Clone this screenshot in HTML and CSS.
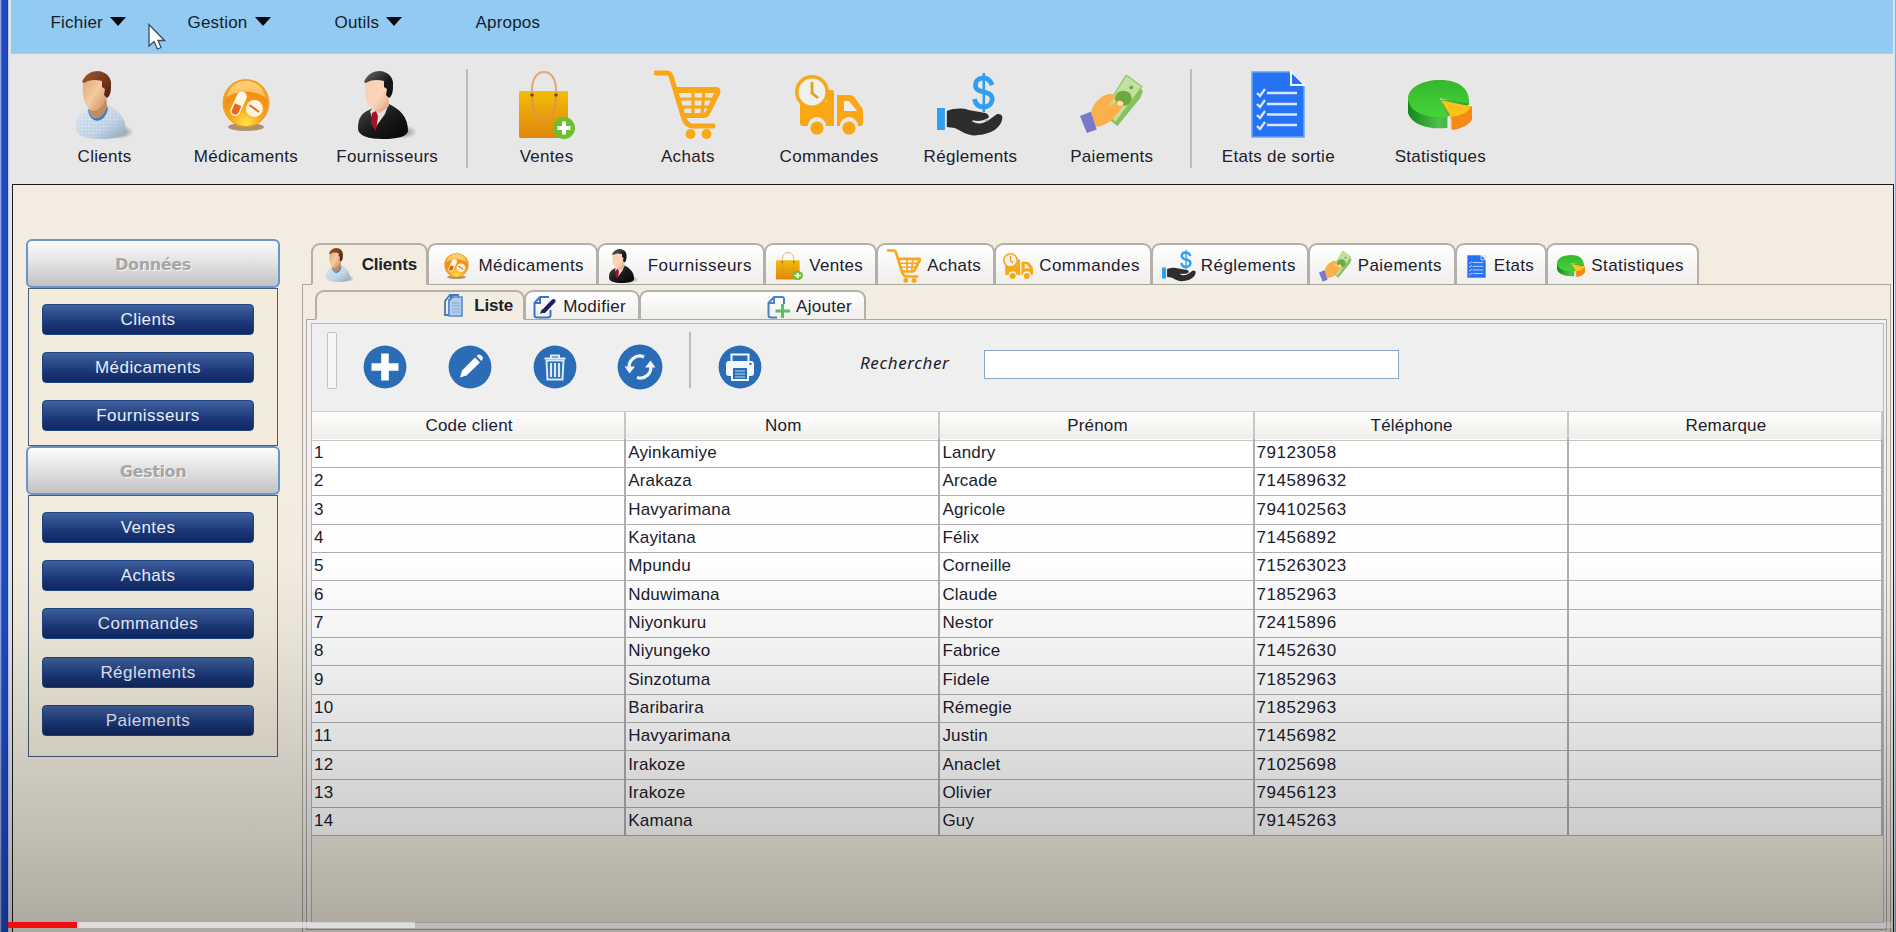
FILE: index.html
```html
<!DOCTYPE html>
<html lang="fr">
<head>
<meta charset="utf-8">
<title>Gestion pharmacie</title>
<link rel="stylesheet" href="styles.css">
</head>
<body>
<svg class="defs" width="0" height="0" aria-hidden="true">
  <defs>
    <linearGradient id="gBag" x1="0" y1="0" x2="0" y2="1"><stop offset="0" stop-color="#f3bd08"/><stop offset="1" stop-color="#de860c"/></linearGradient>
    <linearGradient id="gFace" x1="0" y1="0" x2="1" y2="1"><stop offset="0" stop-color="#d9a272"/><stop offset=".5" stop-color="#f4cba2"/><stop offset="1" stop-color="#c98a58"/></linearGradient>
    <linearGradient id="gFace2" x1="0" y1="0" x2="1" y2="1"><stop offset="0" stop-color="#fbcdb0"/><stop offset=".6" stop-color="#fbd5ba"/><stop offset="1" stop-color="#e5a580"/></linearGradient>
    <linearGradient id="gHair" x1="0" y1="0" x2="1" y2="1"><stop offset="0" stop-color="#a35a33"/><stop offset="1" stop-color="#4e1d0b"/></linearGradient>
    <linearGradient id="gHair2" x1="0" y1="0" x2="1" y2="1"><stop offset="0" stop-color="#6a6e6e"/><stop offset=".6" stop-color="#151717"/></linearGradient>
    <linearGradient id="gShirt" x1="0" y1="0" x2="1" y2="1"><stop offset="0" stop-color="#e9f1f9"/><stop offset=".6" stop-color="#cbdaea"/><stop offset="1" stop-color="#8ca3bb"/></linearGradient>
    <linearGradient id="gSuit" x1="0" y1="0" x2="1" y2="1"><stop offset="0" stop-color="#4b4b4d"/><stop offset=".5" stop-color="#19191b"/><stop offset="1" stop-color="#050505"/></linearGradient>
    <radialGradient id="gPill" cx=".5" cy=".95" r=".9"><stop offset="0" stop-color="#ffe648"/><stop offset=".4" stop-color="#fba51c"/><stop offset=".75" stop-color="#f58d12"/><stop offset="1" stop-color="#f7b43a"/></radialGradient>
    <linearGradient id="gPie" x1="0" y1="0" x2="0" y2="1"><stop offset="0" stop-color="#37b62f"/><stop offset="1" stop-color="#44d53a"/></linearGradient>
    <linearGradient id="gPieSide" x1="0" y1="0" x2="1" y2="0"><stop offset="0" stop-color="#15871a"/><stop offset=".5" stop-color="#4fc04c"/><stop offset="1" stop-color="#2ca42c"/></linearGradient>
    <radialGradient id="gShadow"><stop offset="0" stop-color="#000" stop-opacity=".45"/><stop offset="1" stop-color="#000" stop-opacity="0"/></radialGradient>
    <pattern id="pShirt" width="3.5" height="3.5" patternUnits="userSpaceOnUse"><path d="M1 0V3.5M0 1H3.5" stroke="#8ea9c8" stroke-width=".6" opacity=".45"/></pattern>
  </defs>
  <symbol id="client" viewBox="0 0 58 68" preserveAspectRatio="none">
    <ellipse cx="44" cy="61" rx="14" ry="7" fill="url(#gShadow)"/>
    <path d="M0 57C0 46 4 42 13 38L31 34C41 38 50 46 50 60C49 66 38 68 26 68C10 68 0 65 0 57Z" fill="url(#gShirt)"/>
    <path d="M0 57C0 46 4 42 13 38L31 34C41 38 50 46 50 60C49 66 38 68 26 68C10 68 0 65 0 57Z" fill="url(#pShirt)"/>
    <path d="M13 38C15 49 24 52 31 35L32 38C28 54 14 53 12 39Z" fill="#3f7fc0"/>
    <path d="M14 32L30 24L31 35C27 51 16 50 13 38Z" fill="#c58a5b"/>
    <path d="M7 14C8 6 14 3 20 4C28 4 32 10 31 20C31 31 24 40 17 40C10 38 6 28 7 14Z" fill="url(#gFace)"/>
    <path d="M6 11C9 3 16 0 22 0C31 1 36 7 35 15C35 21 34 25 31 27L28 24L29 18L26 16L26 10C19 8 12 9 8 12Z" fill="url(#gHair)"/>
  </symbol>
  <symbol id="supplier" viewBox="0 0 58 68" preserveAspectRatio="none">
    <ellipse cx="45" cy="61" rx="14" ry="7" fill="url(#gShadow)"/>
    <path d="M0 57C0 46 4 42 13 38L31 33C41 38 50 45 50 60C49 66 38 68 26 68C10 68 0 65 0 57Z" fill="url(#gSuit)"/>
    <path d="M12 40L15 37L25 38L30 35L27 43L17 57Z" fill="#e6dcdc"/>
    <path d="M14 42L18 40L20 45L18 60L13 53Z" fill="#a9131e"/>
    <path d="M14 30L30 24L31 35L22 42L15 38Z" fill="#e9b08d"/>
    <path d="M7 14C8 6 14 3 20 4C28 4 32 10 31 20C31 31 24 40 17 39C10 37 6 28 7 14Z" fill="url(#gFace2)"/>
    <path d="M6 11C9 3 16 0 22 0C31 1 36 7 35 15C35 21 34 25 31 27L28 24L29 18L26 16L26 10C19 8 12 9 8 12Z" fill="url(#gHair2)"/>
  </symbol>
  <symbol id="drug" viewBox="0 0 48 52" preserveAspectRatio="none">
    <ellipse cx="24" cy="48" rx="18" ry="4" fill="#8a5a14" opacity=".6"/>
    <ellipse cx="24" cy="24" rx="23.5" ry="24" fill="#f0a12c"/>
    <ellipse cx="24" cy="24.500" rx="21.500" ry="22.500" fill="url(#gPill)"/>
    <path d="M5 18C8 6 16 2 24 2S40 6 43 18C34 11 14 11 5 18Z" fill="#ffe7a0" opacity=".55"/>
    <g transform="rotate(24 17 25)"><rect x="11.500" y="12" width="10" height="26" rx="5" fill="#fff6e6"/><path d="M13 26H20V33A3.500 3.500 0 0 1 13 33Z" fill="#e8661c"/></g>
    <circle cx="32.500" cy="29.500" r="8.500" fill="#fff3df"/>
    <path d="M27.500 26L37 33" stroke="#d9722b" stroke-width="2"/>
  </symbol>
  <symbol id="bag" viewBox="0 0 56 68" preserveAspectRatio="none">
    <path d="M0 21Q0 20 2 20H47Q49 20 49 21V67H2Q0 67 0 65Z" fill="url(#gBag)"/>
    <path d="M13 23C12 8 18 1 25 1S38 8 37 23" fill="none" stroke="#e0a878" stroke-width="2"/>
    <path d="M13 24C13 41 19 49 25 49S37 41 37 24" fill="none" stroke="#dc9550" stroke-width="2"/>
    <circle cx="13" cy="24" r="1.800" fill="#7a4a08"/><circle cx="37" cy="24" r="1.800" fill="#7a4a08"/>
    <circle cx="45" cy="57" r="11" fill="#6cc030"/>
    <path d="M45 50.500V63.500M38.500 57H51.500" stroke="#fff" stroke-width="4"/>
  </symbol>
  <symbol id="cart" viewBox="0 0 68 69" preserveAspectRatio="none">
    <path d="M2 3H13Q16 3 17 6L30 49Q33 56 39 56H59" fill="none" stroke="#f9a715" stroke-width="5" stroke-linecap="round" stroke-linejoin="round"/>
    <path d="M22 17H63Q68 18 66 24L56 44Q54 48 49 48H32L30 43H49Q51 43 52 41L60 23H24Z" fill="#f9a715"/>
    <path d="M24 29H59M27 37H56M39 20V45M50 20L48 45" stroke="#f9a715" stroke-width="3.200" fill="none"/>
    <circle cx="36.500" cy="64" r="4.900" fill="#f9a715"/><circle cx="52.500" cy="64" r="4.900" fill="#f9a715"/>
  </symbol>
  <symbol id="truck" viewBox="0 0 68 60" preserveAspectRatio="none">
    <path d="M5 27H32V15H37Q39 15 39 18V51H31A9 9 0 0 0 13 51H8Q5 51 5 48Z" fill="#f9a715"/>
    <path d="M42 20H54Q58 20 60 23L67 33Q68 34 68 36V48Q68 51 65 51H63A9 9 0 0 0 45 51H42Z" fill="#f9a715"/>
    <path d="M49 26H54L62 36H49Z" fill="#eee"/>
    <circle cx="17" cy="17" r="17" fill="#f9a715"/><circle cx="17" cy="17" r="13.500" fill="#efefee"/>
    <path d="M17 7V18L23 23" fill="none" stroke="#e5a020" stroke-width="2.800"/>
    <circle cx="22" cy="53" r="6.600" fill="#f9a715"/><circle cx="54" cy="53" r="6.600" fill="#f9a715"/>
  </symbol>
  <symbol id="settle" viewBox="0 0 67 64" preserveAspectRatio="none">
    <rect x="0" y="35" width="8" height="22" fill="#2f9fee"/>
    <path d="M10 38C18 35 26 35 32 37L49 40C54 41 54 48 48 48H36C40 52 48 51 54 46L61 41C66 41 67 43 66 47C64 55 55 61 42 62C32 64 25 58 18 55L10 54Z" fill="#2e2d2d"/>
    <path d="M36 48C44 50 52 47 57 42" fill="none" stroke="#e8e8e8" stroke-width="1.300"/>
    <path d="M56 12C54 7 51 5 47 5C42 5 39 8 39 12C39 22 56 16 56 26C56 31 52 34 47 34C42 34 39 31 38 26" fill="none" stroke="#2f9fee" stroke-width="4.800"/>
    <path d="M47.500 0V39" stroke="#2f9fee" stroke-width="2.600"/>
  </symbol>
  <symbol id="pay" viewBox="0 0 65 66" preserveAspectRatio="none">
    <path d="M49 3L64 18L61 26L38 57L25 46Z" fill="#86c161"/>
    <path d="M47 0L63 13L36 53L24 40Z" fill="#c3e0a0" stroke="#8cc665" stroke-width="1.200"/>
    <circle cx="44" cy="26" r="8.500" fill="#70a840"/>
    <circle cx="52" cy="14" r="2" fill="#6ba43c"/>
    <path d="M11 42C14 30 22 22 32 21L36 24L29 35L40 28C45 30 45 34 41 39C33 51 27 57 16 58Z" fill="#fcb04a"/>
    <ellipse cx="41" cy="32" rx="3" ry="2.500" fill="#ffe0ae"/>
    <path d="M0 46L11 41L17 61L7 65Z" fill="#7a78cb"/>
  </symbol>
  <symbol id="sheet" viewBox="0 0 54 67" preserveAspectRatio="none">
    <path d="M1 1H41L53 14V66H1Z" fill="#2672f5" stroke="#62a4fa" stroke-width="1.500"/>
    <path d="M40 0L54 14H40Z" fill="#2672f5" stroke="#fff" stroke-width="2"/>
    <path d="M40 0H54V14Z" fill="#e7e7e7"/>
    <path d="M16 22H46M16 33H46M16 43.500H46M16 54H46" stroke="#d9e8ff" stroke-width="2.400"/>
    <path d="M6 22L9 25L14 18M6 33L9 36L14 29M6 44L9 47L14 40M6 55L9 58L14 51" fill="none" stroke="#d9e8ff" stroke-width="2.300"/>
  </symbol>
  <symbol id="pie" viewBox="0 0 65 49" preserveAspectRatio="none">
    <path d="M0 19V32C3 43 20 49 40 47V36L62 24V19Z" fill="url(#gPieSide)"/>
    <path d="M32 18L62 23C63 7 50 0 32 0C14 0 0 8 0 18C1 32 19 38 40 36Z" fill="url(#gPie)"/>
    <path d="M33 20L65 26V39C62 44 54 48 45 49L43 35Z" fill="#f58a18"/>
    <path d="M34 20L64 26C62 31 54 35 44 36Z" fill="#fdc31c"/>
    <path d="M44 36V49" stroke="#ffb04a" stroke-width="1"/>
  </symbol>
</svg>

<div class="window">
  <nav class="menubar">
    <span class="menu m1">Fichier<i class="caret"></i></span>
    <span class="menu m2">Gestion<i class="caret"></i></span>
    <span class="menu m3">Outils<i class="caret"></i></span>
    <span class="menu m4">Apropos</span>
  </nav>

  <div class="toolbar">
    <div class="tool"><span class="pic"><svg width="58" height="68"><use href="#client"/></svg></span><span>Clients</span></div>
    <div class="tool"><span class="pic"><svg width="48" height="52"><use href="#drug"/></svg></span><span>Médicaments</span></div>
    <div class="tool"><span class="pic"><svg width="58" height="68"><use href="#supplier"/></svg></span><span>Fournisseurs</span></div>
    <div class="rule"></div>
    <div class="tool"><span class="pic"><svg width="56" height="68"><use href="#bag"/></svg></span><span>Ventes</span></div>
    <div class="tool"><span class="pic"><svg width="68" height="69"><use href="#cart"/></svg></span><span>Achats</span></div>
    <div class="tool"><span class="pic"><svg width="68" height="60"><use href="#truck"/></svg></span><span>Commandes</span></div>
    <div class="tool"><span class="pic"><svg width="66" height="64"><use href="#settle"/></svg></span><span>Réglements</span></div>
    <div class="tool"><span class="pic"><svg width="64" height="59"><use href="#pay"/></svg></span><span>Paiements</span></div>
    <div class="rule"></div>
    <div class="tool wide"><span class="pic"><svg width="54" height="67"><use href="#sheet"/></svg></span><span>Etats de sortie</span></div>
    <div class="tool last"><span class="pic"><svg width="64" height="50"><use href="#pie"/></svg></span><span>Statistiques</span></div>
  </div>

  <div class="desk">
    <aside class="side">
      <div class="head">Données</div>
      <div class="group g1">
        <button>Clients</button><button>Médicaments</button><button>Fournisseurs</button>
      </div>
      <div class="head">Gestion</div>
      <div class="group g2">
        <button>Ventes</button><button>Achats</button><button>Commandes</button><button>Réglements</button><button>Paiements</button>
      </div>
    </aside>

    <main class="main">
      <div class="tabs">
        <div class="tab on t1"><svg width="28" height="34"><use href="#client"/></svg><b>Clients</b></div>
        <div class="tab t2"><svg width="25" height="26"><use href="#drug"/></svg><span>Médicaments</span></div>
        <div class="tab t3"><svg width="29" height="34"><use href="#supplier"/></svg><span>Fournisseurs</span></div>
        <div class="tab t4"><svg width="27" height="28"><use href="#bag"/></svg><span>Ventes</span></div>
        <div class="tab t5"><svg width="35" height="34"><use href="#cart"/></svg><span>Achats</span></div>
        <div class="tab t6"><svg width="30" height="26"><use href="#truck"/></svg><span>Commandes</span></div>
        <div class="tab t7"><svg width="34" height="32"><use href="#settle"/></svg><span>Réglements</span></div>
        <div class="tab t8"><svg width="33" height="31"><use href="#pay"/></svg><span>Paiements</span></div>
        <div class="tab t9"><svg width="19" height="23"><use href="#sheet"/></svg><span>Etats</span></div>
        <div class="tab t10"><svg width="28" height="22"><use href="#pie"/></svg><span>Statistiques</span></div>
      </div>
      <div class="outer">
        <div class="tabs subtabs">
          <div class="tab on s1">
            <svg width="20" height="24" viewBox="0 0 20 24"><path d="M6 3H8L5 6V21H1V7L6 1H14V3" fill="none" stroke="#4279bd" stroke-width="1.800"/><path d="M5 7L9 3H18V22H5Z" fill="#b4cdec" stroke="#5b8cc9" stroke-width="1.600"/><path d="M8 9H16M8 12H16M8 15H16M8 18H16" stroke="#84a9d8"/></svg><b>Liste</b></div>
          <div class="tab s2">
            <svg width="23" height="24" viewBox="0 0 23 24"><path d="M12 2H7L1.500 8V20Q1.500 22.500 4 22.500H15Q17.500 22.500 17.500 20V15M7 2V8H1.500M12 2H16" fill="none" stroke="#3f74c2" stroke-width="2"/><path d="M20.500 6L11 16" stroke="#1c1d62" stroke-width="4" stroke-linecap="round"/><path d="M9 14L12 17L7 19Z" fill="#1c1d62"/></svg><span>Modifier</span></div>
          <div class="tab s3">
            <svg width="24" height="24" viewBox="0 0 24 24"><path d="M17 9V4Q17 2 15 2H7L1.500 8V20Q1.500 22.500 4 22.500H10M7 2V8H1.500" fill="none" stroke="#4a80c8" stroke-width="2"/><path d="M15.500 9V23M8.500 16H23" stroke="#5fbb6c" stroke-width="3"/></svg><span>Ajouter</span></div>
        </div>
        <div class="inner">
          <div class="pane">
            <div class="actions">
              <i class="grip"></i>
              <svg class="act a1" width="44" height="44" viewBox="-22 -22 44 44"><circle r="21.400" fill="#2b6cb6"/><path d="M0-13.500V13.500M-13.500 0H13.500" stroke="#fff" stroke-width="7.600"/></svg>
              <svg class="act a2" width="44" height="44" viewBox="-22 -22 44 44"><circle r="21.400" fill="#2b6cb6"/><path d="M-10 10.500L-8 3.500L5-9.500L10-4.500L-3.500 8.500ZM6.500-11L8.500-12.500Q10-13 12-11L13-9Q13-8 11.500-6Z" fill="#fff"/></svg>
              <svg class="act a3" width="44" height="44" viewBox="-22 -22 44 44"><circle r="21.400" fill="#2b6cb6"/><path d="M-10.500-8.500H10.500M-4-9.500V-11.500H4V-9.500" fill="none" stroke="#dce9f6" stroke-width="2"/><path d="M-8.500-6.500H8.500L7.500 12.500H-7.500Z" fill="#2b6cb6" stroke="#dce9f6" stroke-width="2"/><path d="M-4-4V10M0-4V10M4-4V10" stroke="#dce9f6" stroke-width="2.200"/></svg>
              <svg class="act a4" width="46" height="46" viewBox="-23 -23 46 46"><circle r="22.400" fill="#2b6cb6"/><path d="M-10.500 2A10.500 10.500 0 0 1 4-10M10.500-2A10.500 10.500 0 0 1-3 10.500" fill="none" stroke="#eef5fc" stroke-width="3.200"/><path d="M-15.500-.5H-5L-10.500 6.500ZM15.500 .5H5L10.500-6.500Z" fill="#eef5fc"/></svg>
              <i class="vline"></i>
              <svg class="act a5" width="44" height="44" viewBox="-22 -22 44 44"><circle r="21.400" fill="#2b6cb6"/><path d="M-8.500-5V-12.500H8.500V-5" fill="#2b6cb6" stroke="#f3f8fd" stroke-width="2"/><rect x="-14" y="-6" width="28" height="15" rx="3" fill="#f3f8fd"/><rect x="-8" y="0" width="16" height="13" fill="#2b6cb6" stroke="#f3f8fd" stroke-width="2"/><path d="M-5 4H5M-5 7H5M-5 10H5" stroke="#8db5de" stroke-width="1.300"/><circle cx="10.500" cy="-3" r="1.200" fill="#2b6cb6"/></svg>
              <label class="search">Rechercher</label>
              <input class="field" type="text">
            </div>
            <div class="grid">
              <div class="row th"><span>Code client</span><span>Nom</span><span>Prénom</span><span>Téléphone</span><span>Remarque</span></div>
              <div class="row"><span>1</span><span>Ayinkamiye</span><span>Landry</span><span class="tel">79123058</span><span></span></div>
              <div class="row"><span>2</span><span>Arakaza</span><span>Arcade</span><span class="tel">714589632</span><span></span></div>
              <div class="row"><span>3</span><span>Havyarimana</span><span>Agricole</span><span class="tel">794102563</span><span></span></div>
              <div class="row"><span>4</span><span>Kayitana</span><span>Félix</span><span class="tel">71456892</span><span></span></div>
              <div class="row"><span>5</span><span>Mpundu</span><span>Corneille</span><span class="tel">715263023</span><span></span></div>
              <div class="row"><span>6</span><span>Nduwimana</span><span>Claude</span><span class="tel">71852963</span><span></span></div>
              <div class="row"><span>7</span><span>Niyonkuru</span><span>Nestor</span><span class="tel">72415896</span><span></span></div>
              <div class="row"><span>8</span><span>Niyungeko</span><span>Fabrice</span><span class="tel">71452630</span><span></span></div>
              <div class="row"><span>9</span><span>Sinzotuma</span><span>Fidele</span><span class="tel">71852963</span><span></span></div>
              <div class="row"><span>10</span><span>Baribarira</span><span>Rémegie</span><span class="tel">71852963</span><span></span></div>
              <div class="row"><span>11</span><span>Havyarimana</span><span>Justin</span><span class="tel">71456982</span><span></span></div>
              <div class="row"><span>12</span><span>Irakoze</span><span>Anaclet</span><span class="tel">71025698</span><span></span></div>
              <div class="row"><span>13</span><span>Irakoze</span><span>Olivier</span><span class="tel">79456123</span><span></span></div>
              <div class="row"><span>14</span><span>Kamana</span><span>Guy</span><span class="tel">79145263</span><span></span></div>
            </div>
          </div>
        </div>
      </div>
    </main>
  </div>

  <div class="shade"></div>
  <div class="progress"><i class="played"></i><i class="loaded"></i></div>
  <svg class="cursor" width="18" height="28" viewBox="0 0 18 28"><path d="M1 1.500V23L6 18.500L9.500 26L13 24.500L10 17.500H16.500Z" fill="#fff" stroke="#3a4a66" stroke-width="1.300"/></svg>
</div>
</body>
</html>
```
FILE: styles.css
```css
* { box-sizing: border-box; }
body {
  margin: 0;
  font-family: "Liberation Sans", Arial, sans-serif;
  font-size: 17px;
  letter-spacing: 0.300px;
  color: #20202c;
  background: #e7e7e7;
}
.defs { position: absolute; }
svg { display: block; flex: none; }

.window {
  position: relative;
  width: 1896px;
  height: 932px;
  overflow: hidden;
  padding: 0 2px 0 12px;
  display: flex;
  flex-direction: column;
  background: linear-gradient(90deg, #8fa6dc 0 1px, #4168cc 1px 2px, #2049c2 2px 7px, #1d3fa6 7px 8px, #c2cff0 8px 9px, #e2e5ea 9px 1893px, #d5e2fa 1893px 1895px, #86a9f0 1895px);
}

.menubar {
  height: 54px;
  margin: 0 1px 0 -1px;
  flex: none;
  display: flex;
  background: #93caf1;
  border-bottom: 1px solid #a9d0ea;
  color: #16202c;
  letter-spacing: 0.200px;
}
.menu { display: flex; align-items: flex-start; padding-top: 13px; line-height: 20px; }
.m1 { width: 137px; margin-left: 39.500px; }
.m2 { width: 147px; }
.m3 { width: 141px; }
.caret {
  margin: 4px 0 0 7px;
  border: 8px solid transparent;
  border-top: 9px solid #06090d;
  border-bottom: 0;
}

.toolbar {
  height: 130px;
  flex: none;
  display: flex;
  padding: 11px 0 0 22px;
  background: #e7e7e7;
}
.tool {
  width: 141.300px;
  flex: none;
  display: flex;
  flex-direction: column;
  align-items: center;
  white-space: nowrap;
  line-height: 20px;
}
.pic { height: 79px; display: flex; align-items: center; }
.tool span:last-child { margin-top: 3px; }
.rule { width: 2px; height: 99px; margin: 4px 8px 0 8px; background: #bdbdbd; flex: none; }
.wide { width: 156px; }
.last { width: 168px; }

.desk {
  flex: 1;
  display: flex;
  border: solid #1d1b1b;
  border-width: 1px 1px 0 1px;
  background: #f2ede0;
  min-height: 0;
}

.side { width: 289px; flex: none; padding: 54px 0 0 13px; }
.head {
  width: 254px;
  height: 49px;
  border: 2px solid #6b95c6;
  border-radius: 6px;
  background: linear-gradient(#fcfcfc, #dedede 55%, #c2c2c2);
  color: #a6a6a6;
  font: bold 16px/48px "DejaVu Sans", Verdana, sans-serif;
  letter-spacing: -0.350px;
  text-align: center;
  text-shadow: 1px 1px 0 #f6f6f6;
}
.group {
  width: 250px;
  margin-left: 2px;
  border: 1.500px solid #445e7c;
  background: #f3ecdc;
  padding: 15px 0 0 13px;
  display: flex;
  flex-direction: column;
  gap: 17.200px;
}
.g1 { height: 158px; }
.g2 { height: 262px; padding-top: 16px; }
.group button {
  width: 212px;
  height: 31px;
  padding: 1px 0 0;
  border: 1px solid #1d4586;
  border-radius: 4px;
  background: linear-gradient(#3f619c, #1c387a 60%, #10265f);
  color: #e9edf6;
  font: 17px/28px "Liberation Sans", Arial, sans-serif;
  letter-spacing: 0.450px;
}

.main { flex: 1; min-width: 0; display: flex; flex-direction: column; padding: 58px 2px 0 0; }
.tabs { display: flex; padding-left: 9px; height: 42px; flex: none; position: relative; z-index: 1; margin-bottom: -1px; }
.tab {
  display: flex;
  align-items: center;
  justify-content: flex-end;
  white-space: nowrap;
  margin-right: -1px;
  padding: 3px 12px 0 0;
  gap: 10px;
  border: 2px solid #b3b0ab;
  border-bottom: 1px solid #aaa7a1;
  border-radius: 9px 9px 0 0;
  background: linear-gradient(#fff, #efeeeb);
}
.tab.on { background: #f2ede0; border-bottom-color: #f2ede0; padding-top: 0; }
.tab b { letter-spacing: -0.200px; }
.t1 { width: 117px; padding-right: 9px; gap: 8px; }
.t2 { width: 171px; padding-right: 12px; letter-spacing: 0.400px; }
.t3 { width: 168px; padding-right: 11px; letter-spacing: 0.500px; }
.t4 { width: 113px; gap: 6px; }
.t5 { width: 119px; gap: 5px; }
.t6 { width: 158px; padding-right: 10px; gap: 6px; letter-spacing: 0.500px; }
.t7 { width: 158px; padding-right: 11px; gap: 5px; letter-spacing: 0.450px; }
.t8 { width: 148px; padding-right: 12px; gap: 6px; letter-spacing: 0.450px; }
.t9 { width: 92px; padding-right: 11px; gap: 8px; }
.t10 { width: 153px; padding-right: 13px; gap: 6px; letter-spacing: 0.400px; }

.outer {
  flex: 1;
  display: flex;
  flex-direction: column;
  min-height: 0;
  border: solid #a9a6a0;
  border-width: 1px 1px 0 1px;
  padding: 5px 3px 0 3px;
}
.subtabs { height: 30px; }
.subtabs .tab { padding-top: 2px; }
.subtabs .tab.on { padding-top: 0; }
.s1 { width: 210px; padding-right: 10px; }
.s2 { width: 116px; gap: 7px; padding-right: 12px; }
.s3 { width: 227px; gap: 5px; }

.inner {
  height: 611px;
  border: 1px solid #aaa6a6;
  padding: 3px 2px 6px 4px;
  background: #f3eff1;
}
.pane { height: 100%; border: 1px solid #b4b9bd; background: #f2ede0; }
.actions {
  height: 87px;
  display: flex;
  align-items: flex-start;
  padding-left: 15px;
  background: #efefef;
}
.grip { width: 10px; height: 57px; margin-top: 8px; border: 1px solid #c3c3c3; border-radius: 2px; background: #f6f6f6; }
.act { margin-top: 21px; }
.a1 { margin-left: 26px; }
.a2, .a3 { margin-left: 41px; }
.a4 { margin: 20px 0 0 40px; }
.vline { width: 2px; height: 56px; margin: 8px 0 0 26px; background: #bcbcbc; }
.a5 { margin-left: 27px; }
.search {
  width: 124px;
  margin: 27px 0 0 98px;
  font: italic 17px/24px "Noto Sans", sans-serif;
  letter-spacing: 0.600px;
}
.field { width: 415px; height: 29px; margin: 26px 0 0 0; border: 1.500px solid #8aa6c9; background: #fff; border-radius: 0; padding: 0 4px; outline: 0; }

.row { display: grid; grid-template-columns: repeat(5, 1fr); height: 28.350px; background: #fff; line-height: 28px; }
.row span { border: solid #b0aeb0; border-width: 0 2px 1.600px 0; padding-left: 2px; letter-spacing: 0.200px; }
.row .tel { letter-spacing: 0.550px; }
.th { height: 28px; background: linear-gradient(#fff, #efeeea); }
.th span { border-color: #c7c7c5; border-top: 1px solid #cfcfcd; text-align: center; padding: 0 0 0 2px; line-height: 28px; }

.shade {
  position: absolute;
  inset: 440px 0 0 0;
  pointer-events: none;
  background: linear-gradient(rgba(0,0,0,0) 0, rgba(0,0,0,0.005) 120px, rgba(0,0,0,0.040) 190px, rgba(0,0,0,0.135) 310px, rgba(0,0,0,0.200) 395px, rgba(0,0,0,0.285) 490px);
  z-index: 2;
}
.progress { position: absolute; left: 8px; top: 922px; width: 1884px; height: 6px; display: flex; background: rgba(255,255,255,0.200); z-index: 3; }
.played { width: 69px; background: #f50a10; }
.loaded { width: 338px; background: rgba(255,255,255,0.500); }
.cursor { position: absolute; left: 148px; top: 23px; z-index: 3; }
```
